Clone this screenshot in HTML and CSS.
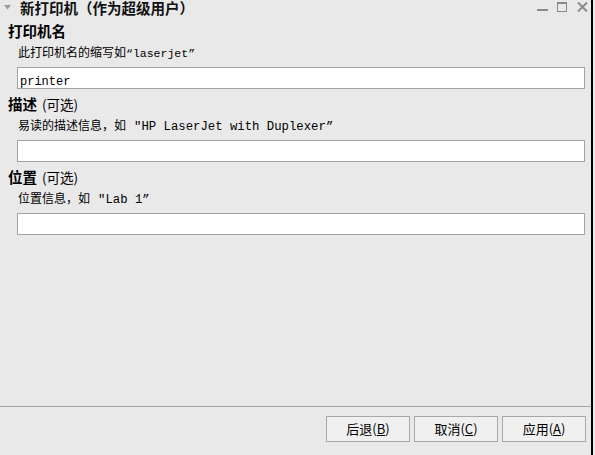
FILE: index.html
```html
<!DOCTYPE html>
<html lang="zh-CN">
<head>
<meta charset="utf-8">
<title>新打印机</title>
<link rel="stylesheet" href="styles.css">
</head>
<body>
<div class="window">
  <div class="titlebar">
    <svg class="menu-arrow" width="7" height="5" viewBox="0 0 7 5"><polygon points="0,0 7,0 3.5,4.5" fill="#9a9a9a"/></svg>
    <span class="title">新打印机（作为超级用户）</span>
    <div class="controls">
      <svg width="11" height="10" viewBox="0 0 11 10"><rect x="0" y="7" width="11" height="2" fill="#8a8a8a"/></svg>
      <svg width="11" height="10" viewBox="0 0 11 10"><rect x="0.5" y="0.5" width="9" height="9" fill="none" stroke="#8a8a8a"/><rect x="0" y="0" width="10" height="2" fill="#8a8a8a"/></svg>
      <svg width="11" height="10" viewBox="0 0 11 10"><path d="M1 0.5 L10 9.5 M10 0.5 L1 9.5" stroke="#8a8a8a" stroke-width="2"/></svg>
    </div>
  </div>
  <div class="content">
    <section class="field">
      <div class="heading"><b>打印机名</b></div>
      <div class="hint">此打印机名的缩写如<span class="mono">“laserjet”</span></div>
      <div class="input"><span class="mono">printer</span></div>
    </section>
    <section class="field">
      <div class="heading"><b>描述</b><span class="opt">(可选)</span></div>
      <div class="hint">易读的描述信息，如<span class="mono wide">"HP LaserJet with Duplexer”</span></div>
      <div class="input"></div>
    </section>
    <section class="field">
      <div class="heading"><b>位置</b><span class="opt">(可选)</span></div>
      <div class="hint">位置信息，如<span class="mono wide">"Lab 1”</span></div>
      <div class="input"></div>
    </section>
  </div>
  <div class="separator"></div>
  <div class="buttons">
    <button class="btn">后退(<u>B</u>)</button>
    <button class="btn">取消(<u>C</u>)</button>
    <button class="btn">应用(<u>A</u>)</button>
  </div>
</div>
</body>
</html>
```
FILE: styles.css
```css
html, body {
  margin: 0;
  padding: 0;
  background: #e9e9e9;
}
body {
  width: 595px;
  height: 455px;
  overflow: hidden;
  font-family: "Noto Sans CJK SC", "Liberation Sans", sans-serif;
  color: #000;
}
.window {
  width: 591px;
  height: 455px;
  border-right: 2px solid #000;
  display: flex;
  flex-direction: column;
  box-sizing: content-box;
}
.titlebar {
  height: 16px;
  display: flex;
  align-items: center;
}
.menu-arrow {
  margin-left: 4px;
  margin-top: -2px;
}
.title {
  margin-left: 9px;
  font-size: 14.5px;
  font-weight: bold;
  line-height: 16px;
  color: #111;
}
.controls {
  margin-left: auto;
  margin-right: 3px;
  display: flex;
  gap: 9px;
  align-items: center;
  margin-top: -2px;
}
.controls svg {
  display: block;
}
.content {
  padding: 0 6px 0 8px;
  display: flex;
  flex-direction: column;
  flex: 1;
}
.field {
  display: flex;
  flex-direction: column;
}
.heading {
  margin-top: 6px;
  height: 18px;
  font-size: 14px;
  line-height: 18px;
  white-space: nowrap;
}
.heading b {
  font-size: 14.5px;
  line-height: 18px;
}
.opt {
  margin-left: 5px;
  font-size: 13.5px;
}
.hint {
  margin-top: 3px;
  margin-left: 10px;
  height: 18px;
  font-size: 12px;
  line-height: 18px;
  white-space: nowrap;
}
.mono {
  font-family: "Liberation Mono", "DejaVu Sans Mono", monospace;
  font-size: 11.5px;
  line-height: 18px;
}
.mono.wide {
  font-size: 12.3px;
  margin-left: 8px;
}
.input {
  margin-top: 6px;
  margin-left: 9px;
  height: 22px;
  box-sizing: border-box;
  background: #fff;
  border: 1px solid #a3a3a3;
  padding-left: 2px;
  line-height: 20px;
  overflow: hidden;
}
.input .mono {
  font-size: 12px;
  line-height: 20px;
}
.separator {
  height: 1px;
  background: #a3a3a3;
}
.buttons {
  display: flex;
  justify-content: flex-end;
  gap: 4px;
  padding: 9px 5px 13px 0;
}
.btn {
  width: 84px;
  height: 26px;
  box-sizing: border-box;
  background: #f0f0f0;
  border: 1px solid #a8a8a8;
  border-radius: 0;
  font-family: "Noto Sans CJK SC", "Liberation Sans", sans-serif;
  font-size: 13px;
  color: #000;
  padding: 0;
  line-height: 22px;
}
```
